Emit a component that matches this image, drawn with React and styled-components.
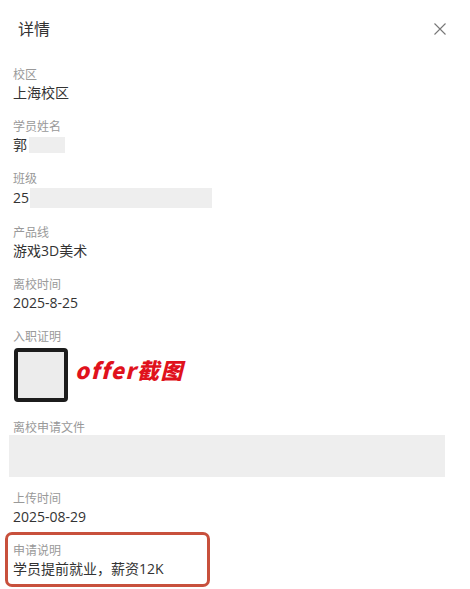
import React from 'react'
import styled, { createGlobalStyle } from 'styled-components'

const GlobalStyle = createGlobalStyle`
  body {
    margin: 0;
    background: #fff;
    font-family: "Open Sans", "Noto Sans CJK SC", sans-serif;
  }
`

const Panel = styled.div`
  width: 470px;
  background: #fff;
`

const Header = styled.div`
  display: flex;
  align-items: center;
  justify-content: space-between;
  height: 56px;
  padding: 0 24px 0 18px;
`

const Title = styled.div`
  font-size: 16px;
  color: #333;
`

const CloseButton = styled.div`
  display: flex;
  width: 12px;
  height: 12px;
  margin-top: 1px;
`

const Content = styled.div`
  display: flex;
  flex-direction: column;
  padding: 10px 13px 0;
`

const Field = styled.div`
  display: flex;
  flex-direction: column;
  margin-bottom: ${(p) => p.$gap ?? 16}px;
`

const Label = styled.div`
  font-size: 12px;
  line-height: 18px;
  color: #999;
`

const Value = styled.div`
  display: flex;
  align-items: center;
  font-size: 14px;
  line-height: 18px;
  color: #333;
`

const Masked = styled.span`
  display: inline-block;
  width: ${(p) => p.$w}px;
  height: ${(p) => p.$h}px;
  margin-left: ${(p) => p.$ml ?? 2}px;
  background: #eeeeee;
`

const ImageRow = styled.div`
  display: flex;
  align-items: flex-start;
  margin-top: 2px;
`

const Thumb = styled.div`
  box-sizing: border-box;
  width: 54px;
  height: 54px;
  margin-left: 1px;
  border: 4px solid #1c1c1c;
  border-radius: 4px;
  background: #ececec;
`

const Note = styled.span`
  margin: 9px 0 0 7px;
  font-family: "Noto Sans CJK SC", sans-serif;
  font-size: 22px;
  line-height: 24px;
  font-weight: 900;
  font-style: italic;
  letter-spacing: 1.5px;
  color: #e0121c;
`

const FileBox = styled.div`
  width: 436px;
  height: 42px;
  margin: -2px 0 0 -4px;
  background: #eeeeee;
`

const Highlight = styled.div`
  box-sizing: border-box;
  width: 205px;
  margin-left: -8px;
  padding: 7px 5px 6px;
  border: 3px solid #c8503c;
  border-radius: 7px;
`

const CloseIcon = () => (
  <svg width="12" height="12" viewBox="0 0 12 12">
    <path d="M0.5 0.5 L11.5 11.5 M11.5 0.5 L0.5 11.5" stroke="#777" strokeWidth="1.1" fill="none" />
  </svg>
)

const App = () => (
  <Panel>
    <GlobalStyle />
    <Header>
      <Title>详情</Title>
      <CloseButton>
        <CloseIcon />
      </CloseButton>
    </Header>
    <Content>
      <Field>
        <Label>校区</Label>
        <Value>上海校区</Value>
      </Field>
      <Field>
        <Label>学员姓名</Label>
        <Value>
          郭
          <Masked $w={36} $h={16} />
        </Value>
      </Field>
      <Field>
        <Label>班级</Label>
        <Value>
          25
          <Masked $w={182} $h={20} $ml={1} />
        </Value>
      </Field>
      <Field>
        <Label>产品线</Label>
        <Value>游戏3D美术</Value>
      </Field>
      <Field>
        <Label>离校时间</Label>
        <Value>2025-8-25</Value>
      </Field>
      <Field $gap={17}>
        <Label>入职证明</Label>
        <ImageRow>
          <Thumb />
          <Note>offer截图</Note>
        </ImageRow>
      </Field>
      <Field $gap={13}>
        <Label>离校申请文件</Label>
        <FileBox />
      </Field>
      <Field $gap={6}>
        <Label>上传时间</Label>
        <Value>2025-08-29</Value>
      </Field>
      <Highlight>
        <Label>申请说明</Label>
        <Value>学员提前就业，薪资12K</Value>
      </Highlight>
    </Content>
  </Panel>
)

export default App
